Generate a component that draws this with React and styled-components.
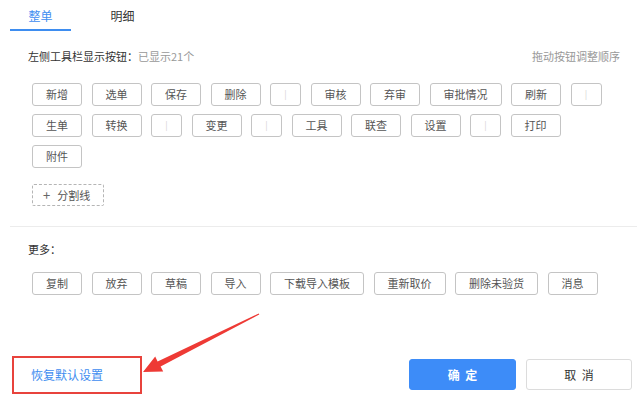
import React from "react";
import styled, { createGlobalStyle } from "styled-components";

const Global = createGlobalStyle`
  html, body { margin: 0; padding: 0; background: #fff; }
  body { font-family: "Noto Sans CJK SC", "Noto Sans", sans-serif; }
  * { box-sizing: border-box; }
`;

const Page = styled.div`
  position: relative;
  width: 642px;
  height: 399px;
  background: #fff;
  overflow: hidden;
`;

const Tabs = styled.div`
  display: flex;
  gap: 21px;
  padding-left: 10px;
`;

const Tab = styled.div`
  width: 61px;
  height: 31px;
  padding-top: 3px;
  line-height: 25px;
  text-align: center;
  font-size: 12px;
  color: ${(p) => (p.$active ? "#3e8df0" : "#333")};
  border-bottom: 2px solid ${(p) => (p.$active ? "#3e8df0" : "transparent")};
`;

const Header = styled.div`
  display: flex;
  justify-content: space-between;
  align-items: center;
  margin-top: 17px;
  padding: 0 22px 0 28px;
  font-size: 11px;
  line-height: 16px;
  color: #333;
`;

const Muted = styled.span`
  color: #999;
`;

const Grid = styled.div`
  display: flex;
  flex-wrap: wrap;
  row-gap: 8px;
  column-gap: 9.5px;
  margin-top: ${(p) => p.$top}px;
  padding: 0 30px 0 32px;
`;

const Btn = styled.div`
  height: 23px;
  min-width: 31px;
  padding: 0 ${(p) => (p.$sep ? 0 : 13)}px;
  border: 1px solid #c4c4c4;
  border-radius: 3px;
  font-size: ${(p) => (p.$sep ? 9 : 11)}px;
  line-height: 21px;
  text-align: center;
  white-space: nowrap;
  color: ${(p) => (p.$sep ? "#d4d4d4" : "#555")};
`;

const AddSep = styled.div`
  display: flex;
  align-items: center;
  gap: 7px;
  width: 72px;
  height: 22px;
  margin: 15.5px 0 0 32px;
  padding-left: 10px;
  border: 1px dashed #b5b5b5;
  border-radius: 2px;
  font-size: 11px;
  color: #555;
`;

const Plus = styled.span`
  font-size: 13px;
  line-height: 1;
  color: #666;
`;

const Divider = styled.div`
  height: 1px;
  background: #ececec;
  margin: 20px 5px 0 10px;
`;

const SubLabel = styled.div`
  margin-top: 14px;
  padding-left: 28px;
  font-size: 11px;
  line-height: 16px;
  color: #333;
`;

const Footer = styled.div`
  display: flex;
  justify-content: space-between;
  align-items: center;
  margin-top: 61px;
  padding: 0 10px 0 12px;
`;

const ResetBox = styled.div`
  width: 130px;
  height: 38px;
  border: 2px solid #e8433c;
  padding-left: 17px;
  display: flex;
  align-items: center;
  font-size: 12px;
  color: #3e8df0;
`;

const Actions = styled.div`
  display: flex;
  gap: 10px;
`;

const ActionBtn = styled.div`
  width: ${(p) => (p.$primary ? 107 : 106)}px;
  height: 31px;
  border-radius: 3px;
  display: flex;
  align-items: center;
  justify-content: center;
  font-size: 12px;
  word-spacing: 3px;
  font-weight: ${(p) => (p.$primary ? 600 : 400)};
  color: ${(p) => (p.$primary ? "#fff" : "#333")};
  background: ${(p) => (p.$primary ? "#3d8cf8" : "#fff")};
  border: 1px solid ${(p) => (p.$primary ? "#3d8cf8" : "#dcdcdc")};
`;

const Arrow = styled.svg`
  position: absolute;
  left: 0;
  top: 0;
  pointer-events: none;
`;

const mainButtons = [
  "新增", "选单", "保存", "删除", "|", "审核", "弃审", "审批情况", "刷新", "|",
  "生单", "转换", "|", "变更", "|", "工具", "联查", "设置", "|", "打印",
  "附件",
];

const moreButtons = ["复制", "放弃", "草稿", "导入", "下载导入模板", "重新取价", "删除未验货", "消息"];

export default function App() {
  return (
    <Page>
      <Global />
      <Tabs>
        <Tab $active>整单</Tab>
        <Tab>明细</Tab>
      </Tabs>
      <Header>
        <span>
          左侧工具栏显示按钮：<Muted>已显示21个</Muted>
        </span>
        <Muted>拖动按钮调整顺序</Muted>
      </Header>
      <Grid $top={19}>
        {mainButtons.map((b, i) => (
          <Btn key={i} $sep={b === "|"}>{b}</Btn>
        ))}
      </Grid>
      <AddSep>
        <Plus>+</Plus>
        <span>分割线</span>
      </AddSep>
      <Divider />
      <SubLabel>更多：</SubLabel>
      <Grid $top={15}>
        {moreButtons.map((b, i) => (
          <Btn key={i}>{b}</Btn>
        ))}
      </Grid>
      <Footer>
        <ResetBox>恢复默认设置</ResetBox>
        <Actions>
          <ActionBtn $primary>确 定</ActionBtn>
          <ActionBtn>取 消</ActionBtn>
        </Actions>
      </Footer>
      <Arrow width="642" height="399" viewBox="0 0 642 399">
        <polygon
          fill="#ee3a35"
          points="259.3,314.5 160.6,366.4 163.2,371.5 143,372 155.2,356.4 157.6,361.4 258.7,313.5"
        />
      </Arrow>
    </Page>
  );
}
